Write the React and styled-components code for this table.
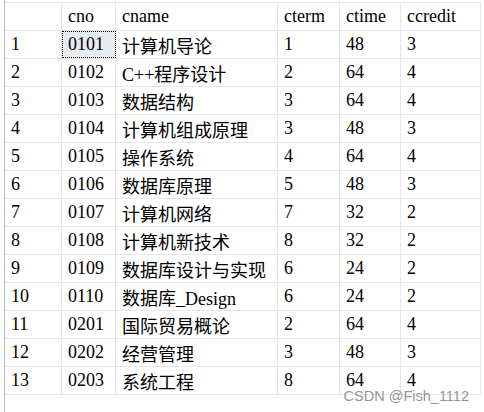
import React from 'react'
import styled, { createGlobalStyle } from 'styled-components'

const GlobalStyle = createGlobalStyle`
  html, body {
    margin: 0;
    padding: 0;
    background: #fff;
  }
`

const Frame = styled.div`
  position: relative;
  height: 412px;
  margin-left: 4px;
  border-left: 1px solid #bdbdbd;
  font-family: "Liberation Serif", "Noto Sans CJK SC", serif;
  font-size: 18px;
  color: #000;
  overflow: hidden;
`

const Grid = styled.div`
  padding-top: 2px;
  width: 476px;
`

const Row = styled.div`
  display: grid;
  grid-template-columns: 57px 54px 162px 62px 61px 80px;
  height: ${(p) => (p.$head ? '29px' : '28px')};
  box-sizing: border-box;
  border-top: ${(p) => (p.$head ? '1px solid #e6e6e6' : 'none')};
  border-bottom: 1px solid #e6e6e6;
`

const Cell = styled.div`
  box-sizing: border-box;
  display: flex;
  align-items: center;
  padding-left: 6px;
  border-right: 1px solid #e6e6e6;
  white-space: nowrap;
  overflow: hidden;
  background: ${(p) => (p.$selected ? '#e7ecf0' : 'transparent')};
  outline: ${(p) => (p.$selected ? '1px dotted #000' : 'none')};
  outline-offset: -1px;
`

const Watermark = styled.div`
  position: absolute;
  top: 389px;
  right: 15px;
  font-family: "Liberation Sans", Arial, sans-serif;
  font-size: 14.5px;
  line-height: 14.5px;
  color: rgba(120, 120, 120, 0.8);
  white-space: nowrap;
`

const columns = ['', 'cno', 'cname', 'cterm', 'ctime', 'ccredit']

const rows = [
  ['0101', '计算机导论', 1, 48, 3],
  ['0102', 'C++程序设计', 2, 64, 4],
  ['0103', '数据结构', 3, 64, 4],
  ['0104', '计算机组成原理', 3, 48, 3],
  ['0105', '操作系统', 4, 64, 4],
  ['0106', '数据库原理', 5, 48, 3],
  ['0107', '计算机网络', 7, 32, 2],
  ['0108', '计算机新技术', 8, 32, 2],
  ['0109', '数据库设计与实现', 6, 24, 2],
  ['0110', '数据库_Design', 6, 24, 2],
  ['0201', '国际贸易概论', 2, 64, 4],
  ['0202', '经营管理', 3, 48, 3],
  ['0203', '系统工程', 8, 64, 4],
]

export default function App() {
  return (
    <>
      <GlobalStyle />
      <Frame>
        <Grid>
          <Row $head>
            {columns.map((c, i) => (
              <Cell key={i}>{c}</Cell>
            ))}
          </Row>
          {rows.map((r, i) => (
            <Row key={r[0]}>
              <Cell>{i + 1}</Cell>
              {r.map((v, j) => (
                <Cell key={j} $selected={i === 0 && j === 0}>{v}</Cell>
              ))}
            </Row>
          ))}
        </Grid>
        <Watermark>CSDN @Fish_1112</Watermark>
      </Frame>
    </>
  )
}
